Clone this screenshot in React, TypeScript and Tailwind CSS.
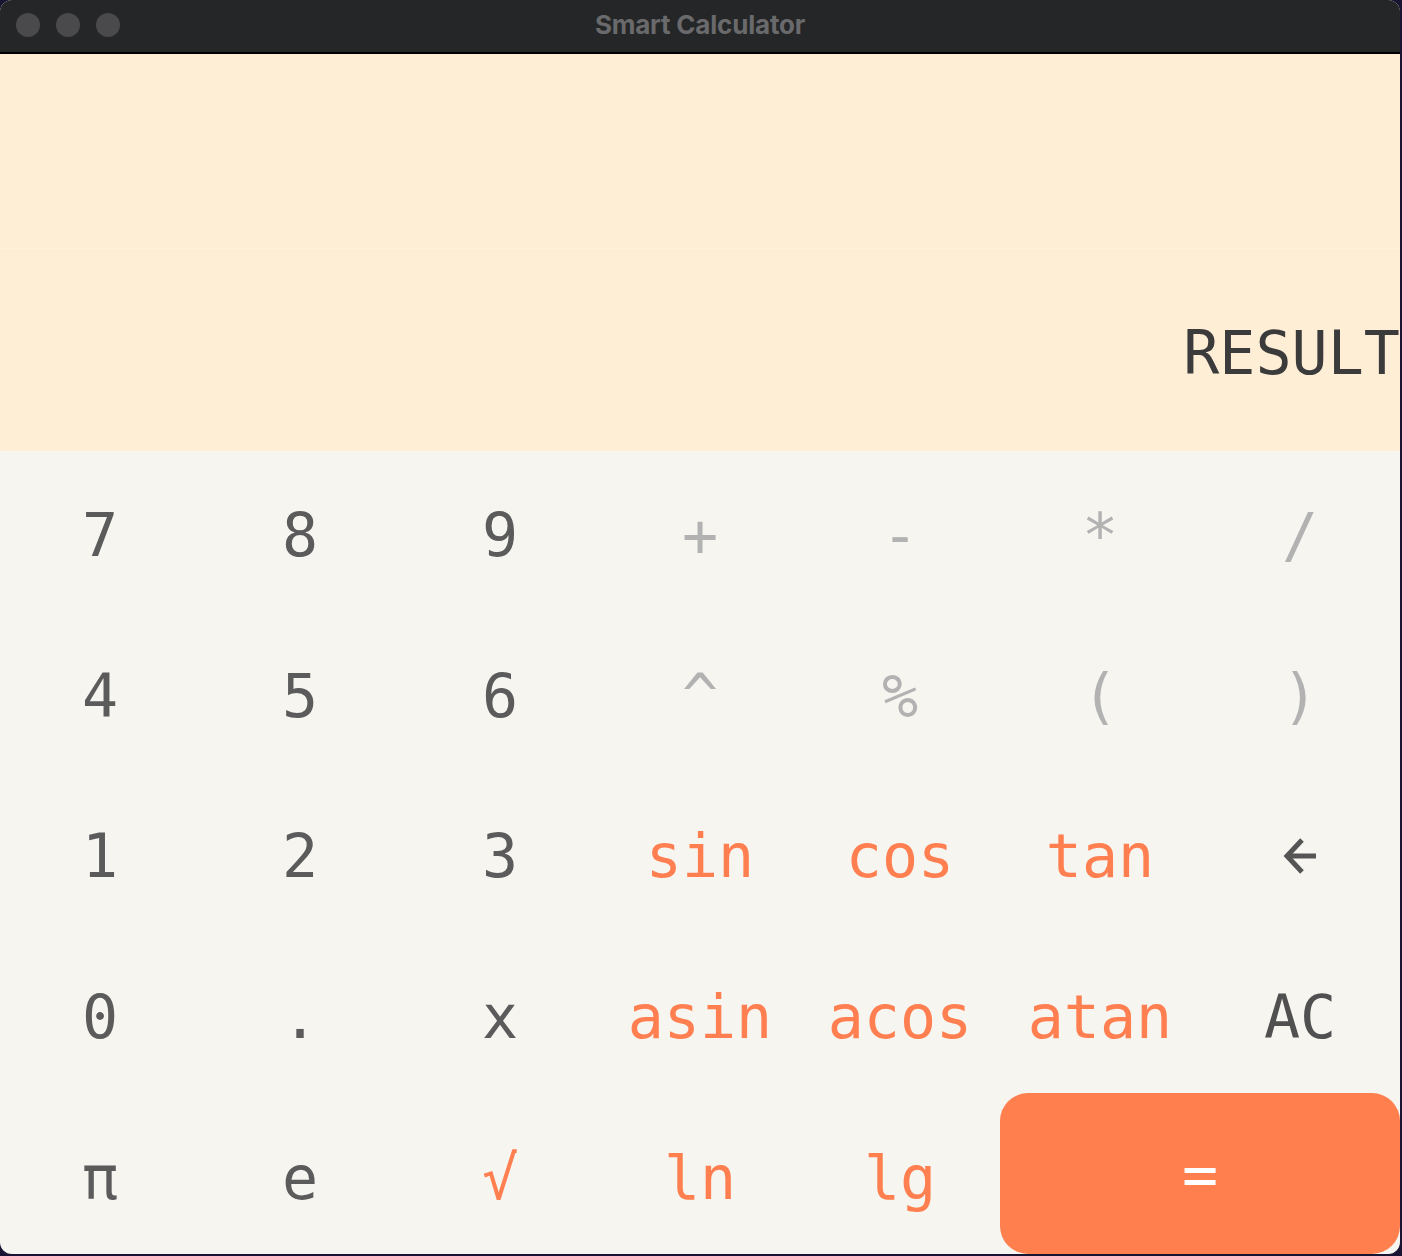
import React from 'react';

type Key = { label: React.ReactNode; tone: 'num' | 'op' | 'fn' | 'dark' };

const KEYS: Key[] = [
  { label: '7', tone: 'num' }, { label: '8', tone: 'num' }, { label: '9', tone: 'num' },
  { label: '+', tone: 'op' }, { label: '-', tone: 'op' }, { label: '*', tone: 'op' }, { label: '/', tone: 'op' },
  { label: '4', tone: 'num' }, { label: '5', tone: 'num' }, { label: '6', tone: 'num' },
  { label: '^', tone: 'op' }, { label: '%', tone: 'op' }, { label: '(', tone: 'op' }, { label: ')', tone: 'op' },
  { label: '1', tone: 'num' }, { label: '2', tone: 'num' }, { label: '3', tone: 'num' },
  { label: 'sin', tone: 'fn' }, { label: 'cos', tone: 'fn' }, { label: 'tan', tone: 'fn' }, { label: 'back', tone: 'dark' },
  { label: '0', tone: 'num' }, { label: '.', tone: 'num' }, { label: 'x', tone: 'num' },
  { label: 'asin', tone: 'fn' }, { label: 'acos', tone: 'fn' }, { label: 'atan', tone: 'fn' }, { label: 'AC', tone: 'dark' },
  { label: 'π', tone: 'num' }, { label: 'e', tone: 'num' }, { label: '√', tone: 'fn' },
  { label: 'ln', tone: 'fn' }, { label: 'lg', tone: 'fn' },
];

const TONE: Record<Key['tone'], string> = {
  num: 'text-[#5b5b5b]',
  op: 'text-[#b2b2b2]',
  fn: 'text-[#ff7f50]',
  dark: 'text-[#505050]',
};

function BackArrow() {
  return (
    <svg width="36" height="38" viewBox="0 0 36 38" fill="none" stroke="#555555" strokeWidth="5" strokeLinecap="butt" strokeLinejoin="miter">
      <path d="M34 19H6" />
      <path d="M20 3 5 19l15 16" />
    </svg>
  );
}

export default function App() {
  return (
    <div className="w-[1402px] h-[1256px] bg-[#1a1433] overflow-hidden">
      <div className="w-[1400px] h-[1254px] rounded-[12px] overflow-hidden flex flex-col bg-[#f7f5f0] shadow-[inset_0_0_0_1px_rgba(255,255,255,0.15)]">
        {/* title bar */}
        <div className="relative h-[54px] shrink-0 bg-[#252628] border-b-2 border-black flex items-center justify-center pb-[3px]">
          <div className="absolute left-[16px] top-[13px] flex gap-[16px]">
            <span className="w-[24px] h-[24px] rounded-full bg-[#4a4a4d]" />
            <span className="w-[24px] h-[24px] rounded-full bg-[#4a4a4d]" />
            <span className="w-[24px] h-[24px] rounded-full bg-[#4a4a4d]" />
          </div>
          <p className="text-[26px] font-bold text-[#6a6a6c] font-['Inter',sans-serif] tracking-[-0.2px]">Smart Calculator</p>
        </div>

        {/* display */}
        <div className="shrink-0 bg-[#ffeed6] font-['DejaVu_Sans_Mono',monospace]">
          <div className="h-[195px] border-b border-[#fff1dc]" />
          <div className="h-[202px] flex items-center justify-end overflow-hidden pt-[6px]">
            <p className="text-[60px] leading-none text-[#3b3b3b] whitespace-nowrap">RESULT</p>
          </div>
        </div>

        {/* keypad */}
        <div className="flex-1 grid grid-cols-7 grid-rows-5 font-['DejaVu_Sans_Mono',monospace]">
          {KEYS.map((k, i) => (
            <button key={i} className={`flex items-center justify-center pt-[8px] text-[60px] leading-none ${TONE[k.tone]}`}>
              {k.label === 'back' ? <BackArrow /> : k.label}
            </button>
          ))}
          <button className="col-span-2 flex items-center justify-center bg-[#ff7f4f] rounded-[28px] text-white text-[60px] leading-none">
            =
          </button>
        </div>
      </div>
    </div>
  );
}
